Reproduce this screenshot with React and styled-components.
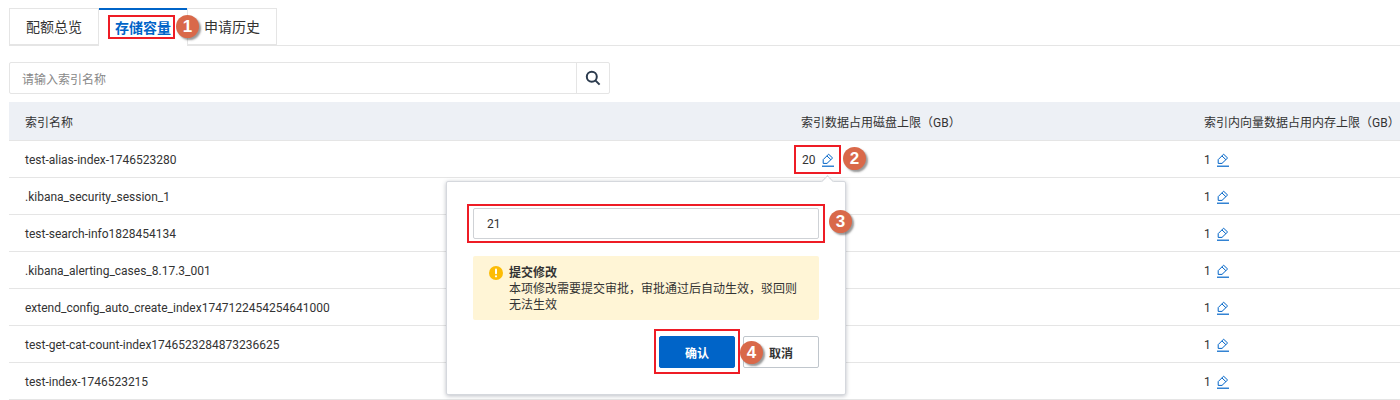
import React from 'react'
import styled, { createGlobalStyle } from 'styled-components'

const Global = createGlobalStyle`
  html, body { margin: 0; padding: 0; background: #fff; }
  body {
    width: 1400px;
    height: 400px;
    overflow: hidden;
    font-family: Roboto, "Noto Sans CJK SC", sans-serif;
    font-size: 12px;
    color: #333;
  }
`

const Page = styled.div`
  padding-top: 8px;
  padding-left: 9px;
`

const TabBar = styled.div`
  display: flex;
  height: 38px;
  box-sizing: border-box;
  border-bottom: 1px solid #e5e5e5;
`

const Tab = styled.div`
  position: relative;
  box-sizing: border-box;
  height: ${(p) => (p.$active ? '38px' : '37px')};
  width: ${(p) => p.$width}px;
  display: flex;
  align-items: center;
  padding-left: ${(p) => p.$pad}px;
  padding-bottom: 2px;
  font-size: 14px;
  font-weight: ${(p) => (p.$active ? 600 : 400)};
  color: ${(p) => (p.$active ? '#0064c8' : '#333')};
  background: #fff;
  border-left: ${(p) => (p.$active ? 'none' : '1px solid #e5e5e5')};
  border-top: ${(p) => (p.$active ? '2px solid #0064c8' : '1px solid #e5e5e5')};
  border-right: ${(p) => (p.$active ? 'none' : '1px solid #e5e5e5')};
  border-bottom: ${(p) => (p.$active ? 'none' : '1px solid #e5e5e5')};
`

const TabMark = styled.span`
  position: relative;
  display: flex;
  align-items: center;
  box-sizing: border-box;
  height: 24px;
  margin-left: -7px;
  padding: 0 2px 0 5px;
  border: 2px solid #ee1c25;
`

const Search = styled.div`
  display: flex;
  width: 601px;
  height: 32px;
  margin-top: 16px;
  box-sizing: border-box;
  border: 1px solid #e5e5e5;
  border-radius: 2px;
`

const SearchInput = styled.div`
  flex: 1;
  display: flex;
  align-items: center;
  padding-left: 12px;
  color: #888;
`

const SearchButton = styled.div`
  width: 32px;
  display: flex;
  align-items: center;
  justify-content: center;
  border-left: 1px solid #e5e5e5;
`

const Table = styled.div`
  position: relative;
  margin-top: 8px;
`

const Row = styled.div`
  display: grid;
  grid-template-columns: 776px 403px 1fr;
  align-items: center;
  box-sizing: border-box;
  height: ${(p) => (p.$head ? '39px' : '37px')};
  padding-top: ${(p) => (p.$head ? '0' : '1px')};
  background: ${(p) => (p.$head ? '#edf0f5' : '#fff')};
  border-bottom: 1px solid #e5e5e5;
`

const Cell = styled.div`
  padding-left: 16px;
  display: flex;
  align-items: center;
  white-space: nowrap;
`

const Value = styled.span`
  display: flex;
  align-items: center;
  gap: 6px;
`

const ValueMark = styled.span`
  position: relative;
  display: flex;
  align-items: center;
  box-sizing: border-box;
  width: 47px;
  height: 29px;
  margin-left: -7px;
  padding-left: 6px;
  gap: 6px;
  border: 2px solid #ee1c25;
`

const Popover = styled.div`
  position: absolute;
  left: 437px;
  top: 79px;
  width: 400px;
  box-sizing: border-box;
  padding: 26px 26px 26px;
  background: #fff;
  border: 1px solid #d5d8dd;
  border-radius: 2px;
  box-shadow: 0 1px 4px rgba(60, 70, 90, 0.35);
`

const Arrow = styled.div`
  position: absolute;
  top: -5px;
  left: 376px;
  width: 8px;
  height: 8px;
  background: #fff;
  border-top: 1px solid #d5d8dd;
  border-left: 1px solid #d5d8dd;
  transform: rotate(45deg);
`

const InputMark = styled.div`
  position: relative;
  margin: -4px -6px;
  padding: 2px 4px;
  border: 2px solid #ee1c25;
`

const Input = styled.div`
  box-sizing: border-box;
  height: 31px;
  padding: 1px 0 0 13px;
  display: flex;
  align-items: center;
  border: 1px solid #cfd2d6;
  border-radius: 2px;
`

const Alert = styled.div`
  display: flex;
  gap: 6px;
  margin-top: 17px;
  height: 64px;
  box-sizing: border-box;
  padding: 9px 14px 0 16px;
  background: #fff5d6;
  border-radius: 2px;
  line-height: 16px;
`

const AlertIcon = styled.svg`
  flex: none;
  width: 14px;
  height: 14px;
  margin-top: 1px;
`

const AlertTitle = styled.div`
  font-weight: 600;
`

const Actions = styled.div`
  display: flex;
  justify-content: flex-end;
  gap: 8px;
  margin-top: 16px;
`

const ConfirmMark = styled.div`
  margin: -7px -5px -6px 0;
  padding: 5px 3px 4px;
  border: 2px solid #ee1c25;
  display: flex;
`

const Button = styled.div`
  position: relative;
  box-sizing: border-box;
  width: 76px;
  height: 32px;
  display: flex;
  align-items: center;
  justify-content: center;
  font-weight: 600;
  border-radius: 2px;
  color: ${(p) => (p.$primary ? '#fff' : '#333')};
  background: ${(p) => (p.$primary ? '#0064c8' : '#fff')};
  border: 1px solid ${(p) => (p.$primary ? '#0064c8' : '#c0c6cc')};
`

const Badge = styled.span`
  position: absolute;
  left: ${(p) => p.$left}px;
  top: ${(p) => p.$top}px;
  width: 23px;
  height: 23px;
  display: flex;
  align-items: center;
  justify-content: center;
  border-radius: 50%;
  background: #d9694a;
  color: #fff;
  font-family: "Liberation Sans", sans-serif;
  font-size: 17px;
  font-weight: 700;
  box-shadow: 2px 2px 2px rgba(70, 70, 70, 0.55);
  z-index: 3;
`

const Pencil = () => (
  <svg width="12" height="14" viewBox="0 0 12 14" fill="none" stroke="#0064c8" strokeWidth="1">
    <path d="M6.6 1.2 L10.6 5 L5 10.4 L1.2 10.4 L1.2 6.6 Z" strokeLinejoin="round" />
    <path d="M4.9 2.9 L8.9 6.7" />
    <path d="M0 13.2 H12" strokeWidth="1.2" />
  </svg>
)

const rows = [
  { name: 'test-alias-index-1746523280', disk: '20' },
  { name: '.kibana_security_session_1' },
  { name: 'test-search-info1828454134' },
  { name: '.kibana_alerting_cases_8.17.3_001' },
  { name: 'extend_config_auto_create_index1747122454254641000' },
  { name: 'test-get-cat-count-index1746523284873236625' },
  { name: 'test-index-1746523215' },
]

export default function App() {
  return (
    <Page>
      <Global />
      <TabBar>
        <Tab $width={90} $pad={16}>配额总览</Tab>
        <Tab $active $width={88} $pad={16}>
          <TabMark>
            存储容量
            <Badge $left={66} $top={-2}>1</Badge>
          </TabMark>
        </Tab>
        <Tab $width={90} $pad={16}>申请历史</Tab>
      </TabBar>

      <Search>
        <SearchInput>请输入索引名称</SearchInput>
        <SearchButton>
          <svg width="16" height="16" viewBox="0 0 16 16" fill="none" stroke="#2b3a4d" strokeWidth="2">
            <circle cx="6.8" cy="6.8" r="5" />
            <path d="M10.6 10.6 L14.6 14.6" />
          </svg>
        </SearchButton>
      </Search>

      <Table>
        <Row $head>
          <Cell>索引名称</Cell>
          <Cell>索引数据占用磁盘上限（GB）</Cell>
          <Cell>索引内向量数据占用内存上限（GB）</Cell>
        </Row>
        {rows.map((row) => (
          <Row key={row.name}>
            <Cell>{row.name}</Cell>
            <Cell>
              {row.disk && (
                <ValueMark>
                  {row.disk}
                  <Pencil />
                  <Badge $left={47} $top={0}>2</Badge>
                </ValueMark>
              )}
            </Cell>
            <Cell>
              <Value>
                1
                <Pencil />
              </Value>
            </Cell>
          </Row>
        ))}

        <Popover>
          <Arrow />
          <InputMark>
            <Input>21</Input>
            <Badge $left={360} $top={4}>3</Badge>
          </InputMark>
          <Alert>
            <AlertIcon viewBox="0 0 14 14">
              <circle cx="7" cy="7" r="7" fill="#fcbc05" />
              <rect x="6" y="2.6" width="2" height="5.6" rx="1" fill="#fff" />
              <circle cx="7" cy="10.3" r="1.1" fill="#fff" />
            </AlertIcon>
            <div>
              <AlertTitle>提交修改</AlertTitle>
              本项修改需要提交审批，审批通过后自动生效，驳回则无法生效
            </div>
          </Alert>
          <Actions>
            <ConfirmMark>
              <Button $primary>确认</Button>
            </ConfirmMark>
            <Button>
              取消
              <Badge $left={-4} $top={4}>4</Badge>
            </Button>
          </Actions>
        </Popover>
      </Table>
    </Page>
  )
}
